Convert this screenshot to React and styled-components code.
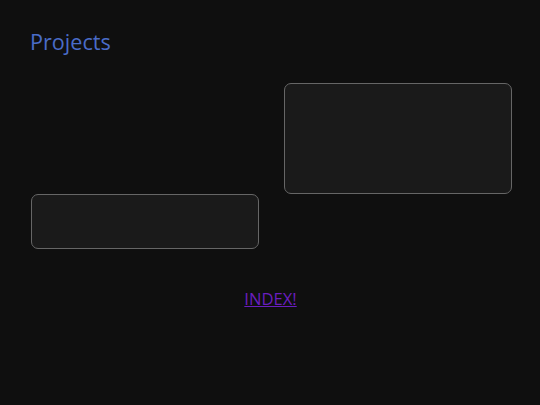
import React from 'react';
import styled, { createGlobalStyle } from 'styled-components';

const GlobalStyle = createGlobalStyle`
  html, body {
    margin: 0;
    padding: 0;
    background: #0f0f0f;
  }
  body {
    font-family: "Open Sans", "Noto Sans", sans-serif;
  }
`;

const Page = styled.div`
  min-height: 405px;
  box-sizing: border-box;
  padding: 27px 28px 25px 31px;
  background: #0f0f0f;
`;

const Title = styled.h2`
  margin: 0 0 0 -1px;
  font-size: 21.6px;
  font-weight: 400;
  line-height: 30px;
  color: #4a6cc8;
`;

const Grid = styled.div`
  display: grid;
  grid-template-columns: 1fr 1fr;
  column-gap: 25px;
  margin-top: 26px;
`;

const Card = styled.div`
  box-sizing: border-box;
  height: ${(p) => p.$h}px;
  grid-column: ${(p) => p.$col};
  grid-row: ${(p) => p.$row};
  background: #1a1a1a;
  border: 1px solid #666666;
  border-radius: 7px;
`;

const Footer = styled.div`
  margin-top: 39px;
  padding-right: 2px;
  text-align: center;
  font-size: 16.6px;
  line-height: 22px;
`;

const IndexLink = styled.a`
  color: #6a1ebe;
  text-decoration: underline;
`;

const App = () => {
  return (
    <Page>
      <GlobalStyle />
      <Title>Projects</Title>
      <Grid>
        <Card $col={2} $row={1} $h={111} />
        <Card $col={1} $row={2} $h={55} />
      </Grid>
      <Footer>
        <IndexLink href="#">INDEX!</IndexLink>
      </Footer>
    </Page>
  );
};

export default App;
